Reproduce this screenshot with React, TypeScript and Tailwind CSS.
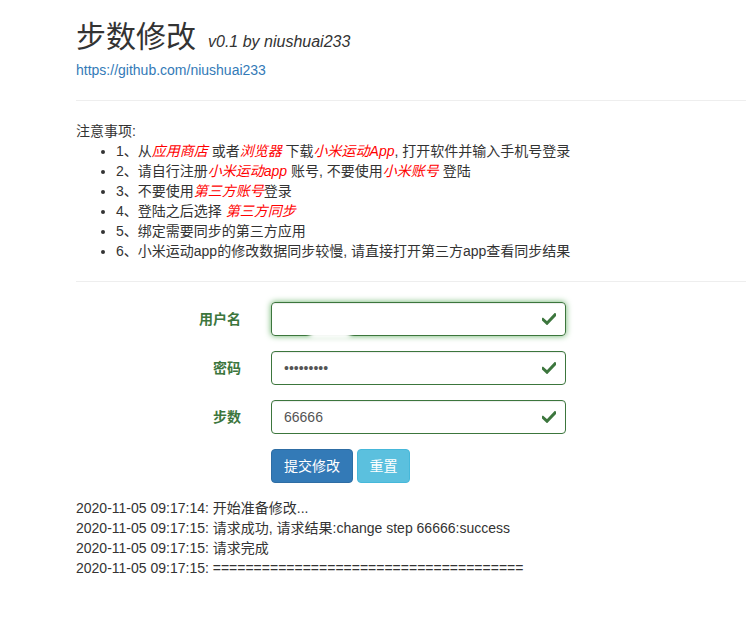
import React from "react";

const font = { fontFamily: '"Liberation Sans", "Noto Sans CJK SC", sans-serif' };

function Check() {
  return (
    <svg
      className="absolute right-[10px] top-[11px]"
      width="14"
      height="12"
      viewBox="0 0 14 12"
    >
      <path d="M1 6.5 L5 10.2 L13 1.8" fill="none" stroke="#3c763d" strokeWidth="3" strokeLinecap="square" />
    </svg>
  );
}

function Red({ children }: { children: React.ReactNode }) {
  return <i className="text-[#ff0000]">{children}</i>;
}

export default function App() {
  return (
    <div className="min-h-[620px] w-[746px] overflow-hidden bg-white text-[14px] leading-[20px] text-[#333]" style={font}>
      <div className="pl-[76px]">
        <div className="pt-[17px]">
          <h1 className="flex items-baseline text-[30px] leading-[40px] font-normal text-[#333]">
            步数修改
            <small className="ml-[12px] text-[16px] italic text-[#333]">v0.1 by niushuai233</small>
          </h1>
          <a className="-mt-[2px] block text-[#337ab7]">https://github.com/niushuai233</a>
        </div>
        <hr className="mt-[20px] w-[700px] border-t border-[#eee]" />
        <div className="pt-[20px]">
          <p>注意事项:</p>
          <ul className="list-disc pl-[40px]">
            <li>1、从<Red>应用商店</Red> 或者<Red>浏览器</Red> 下载<Red>小米运动App</Red>, 打开软件并输入手机号登录</li>
            <li>2、请自行注册<Red>小米运动app</Red> 账号, 不要使用<Red>小米账号</Red> 登陆</li>
            <li>3、不要使用<Red>第三方账号</Red>登录</li>
            <li>4、登陆之后选择 <Red>第三方同步</Red></li>
            <li>5、绑定需要同步的第三方应用</li>
            <li>6、小米运动app的修改数据同步较慢, 请直接打开第三方app查看同步结果</li>
          </ul>
        </div>
        <hr className="mt-[20px] w-[700px] border-t border-[#eee]" />
        <form className="pt-[20px]">
          {[
            { label: "用户名", value: "", focus: true, type: "text" },
            { label: "密码", value: "•••••••••", focus: false, type: "pw" },
            { label: "步数", value: "66666", focus: false, type: "text" },
          ].map((r) => (
            <div key={r.label} className="mb-[15px] flex items-center">
              <label className="w-[180px] pr-[15px] text-right font-bold text-[#3c763d]">{r.label}</label>
              <div className="relative ml-[15px] h-[34px] w-[295px]">
                <div
                  className={
                    "flex h-[34px] w-[295px] items-center rounded-[4px] border border-[#3c763d] px-[12px] text-[#555] " +
                    (r.focus ? "shadow-[inset_0_1px_1px_rgba(0,0,0,0.075),0_0_6px_#67b168]" : "shadow-[inset_0_1px_1px_rgba(0,0,0,0.075)]")
                  }
                >
                  <span>{r.value}</span>
                </div>
                <Check />
                {r.focus && (
                  <div className="absolute left-[38px] top-[27px] h-[10px] w-[42px] rounded-full bg-white blur-[2px]" />
                )}
              </div>
            </div>
          ))}
          <div className="flex gap-[4px] pl-[195px]">
            <button type="button" className="h-[34px] w-[82px] rounded-[4px] border border-[#2e6da4] bg-[#337ab7] text-white">提交修改</button>
            <button type="button" className="h-[34px] w-[53px] rounded-[4px] border border-[#46b8da] bg-[#5bc0de] text-white">重置</button>
          </div>
        </form>
        <div className="mt-[15px]">
          <div>2020-11-05 09:17:14: 开始准备修改...</div>
          <div>2020-11-05 09:17:15: 请求成功, 请求结果:change step 66666:success</div>
          <div>2020-11-05 09:17:15: 请求完成</div>
          <div>2020-11-05 09:17:15: ======================================</div>
        </div>
      </div>
    </div>
  );
}
